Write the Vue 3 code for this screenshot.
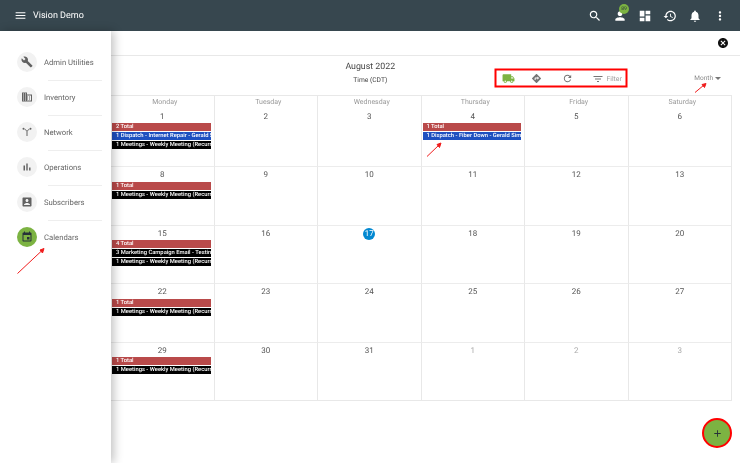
<script setup>
const icons = {
  menu: "M3 18h18v-2H3v2zm0-5h18v-2H3v2zm0-7v2h18V6H3z",
  search: "M15.5 14h-.79l-.28-.27C15.41 12.59 16 11.11 16 9.5 16 5.91 13.09 3 9.5 3S3 5.91 3 9.5 5.91 16 9.5 16c1.61 0 3.09-.59 4.23-1.57l.27.28v.79l5 4.99L20.49 19l-4.99-5zm-6 0C7.01 14 5 11.99 5 9.5S7.01 5 9.5 5 14 7.01 14 9.5 11.99 14 9.5 14z",
  person: "M12 12c2.21 0 4-1.79 4-4s-1.79-4-4-4-4 1.79-4 4 1.79 4 4 4zm0 2c-2.67 0-8 1.34-8 4v2h16v-2c0-2.66-5.33-4-8-4z",
  dashboard: "M3 13h8V3H3v10zm0 8h8v-6H3v6zm10 0h8V11h-8v10zm0-18v6h8V3h-8z",
  history: "M13 3c-4.97 0-9 4.03-9 9H1l3.89 3.89.07.14L9 12H6c0-3.87 3.13-7 7-7s7 3.13 7 7-3.13 7-7 7c-1.93 0-3.68-.79-4.94-2.06l-1.42 1.42C8.27 19.99 10.51 21 13 21c4.97 0 9-4.03 9-9s-4.03-9-9-9zm-1 5v5l4.28 2.54.72-1.21-3.5-2.08V8H12z",
  bell: "M12 22c1.1 0 2-.9 2-2h-4c0 1.1.89 2 2 2zm6-6v-5c0-3.07-1.64-5.64-4.5-6.32V4c0-.83-.67-1.5-1.5-1.5s-1.5.67-1.5 1.5v.68C7.63 5.36 6 7.92 6 11v5l-2 2v1h16v-1l-2-2z",
  more: "M12 8c1.1 0 2-.9 2-2s-.9-2-2-2-2 .9-2 2 .9 2 2 2zm0 2c-1.1 0-2 .9-2 2s.9 2 2 2 2-.9 2-2-.9-2-2-2zm0 6c-1.1 0-2 .9-2 2s.9 2 2 2 2-.9 2-2-.9-2-2-2z",
  build: "M22.7 19l-9.1-9.1c.9-2.3.4-5-1.5-6.9-2-2-5-2.4-7.4-1.3L9 6 6 9 1.6 4.7C.4 7.1.9 10.1 2.9 12.1c1.9 1.9 4.6 2.4 6.9 1.5l9.1 9.1c.4.4 1 .4 1.4 0l2.3-2.3c.5-.4.5-1.1.1-1.4z",
  domain: "M12 7V3H2v18h20V7H12zM6 19H4v-2h2v2zm0-4H4v-2h2v2zm0-4H4V9h2v2zm0-4H4V5h2v2zm4 12H8v-2h2v2zm0-4H8v-2h2v2zm0-4H8V9h2v2zm0-4H8V5h2v2zm10 12h-8v-2h2v-2h-2v-2h2v-2h-2V9h8v10zm-2-8h-2v2h2v-2zm0 4h-2v2h2v-2z",
  network: "M5 3.500a2 2 0 1 1 0 4 2 2 0 0 1 0-4zm14 0a2 2 0 1 1 0 4 2 2 0 0 1 0-4zM7 6.500l4 4.200V20h2v-9.300l4-4.200-.9-1-4.100 4.200-4.100-4.200z",
  chart: "M5 9.2h3V19H5zM10.6 5h2.8v14h-2.8zm5.6 8H19v6h-2.8z",
  account: "M3 5v14c0 1.1.89 2 2 2h14c1.1 0 2-.9 2-2V5c0-1.1-.9-2-2-2H5c-1.11 0-2 .9-2 2zm12 4c0 1.66-1.34 3-3 3s-3-1.34-3-3 1.34-3 3-3 3 1.34 3 3zm-9 8c0-2 4-3.1 6-3.1s6 1.1 6 3.1v1H6v-1z",
  event: "M17 12h-5v5h5v-5zM16 1v2H8V1H6v2H5c-1.11 0-1.99.9-1.99 2L3 19c0 1.1.89 2 2 2h14c1.1 0 2-.9 2-2V5c0-1.1-.9-2-2-2h-1V1h-2zm3 18H5V8h14v11z",
  truck: "M20 8h-3V4H3c-1.1 0-2 .9-2 2v11h2c0 1.66 1.34 3 3 3s3-1.34 3-3h6c0 1.66 1.34 3 3 3s3-1.34 3-3h2v-5l-3-4zM6 18.500c-.83 0-1.500-.67-1.500-1.500s.67-1.500 1.500-1.500 1.500.67 1.500 1.500-.67 1.500-1.500 1.500zm13.500-9l1.960 2.500H17V9.500h2.500zm-1.500 9c-.83 0-1.500-.67-1.500-1.500s.67-1.500 1.500-1.500 1.500.67 1.500 1.500-.67 1.500-1.500 1.500z",
  directions: "M21.71 11.29l-9-9c-.39-.39-1.02-.39-1.41 0l-9 9c-.39.39-.39 1.02 0 1.41l9 9c.39.39 1.02.39 1.41 0l9-9c.39-.38.39-1.01 0-1.41zM14 14.500V12h-4v3H8v-4c0-.55.45-1 1-1h5V7.500l3.500 3.500-3.500 3.500z",
  refresh: "M17.65 6.35C16.2 4.9 14.21 4 12 4c-4.42 0-7.99 3.58-7.99 8s3.57 8 7.99 8c3.73 0 6.84-2.55 7.73-6h-2.08c-.82 2.33-3.04 4-5.65 4-3.31 0-6-2.69-6-6s2.69-6 6-6c1.66 0 3.14.69 4.22 1.78L13 11h7V4l-2.35 2.35z",
  filter: "M10 18h4v-2h-4v2zM3 6v2h18V6H3zm3 7h12v-2H6v2z",
  cancel: "M12 2C6.47 2 2 6.47 2 12s4.470 10 10 10 10-4.470 10-10S17.530 2 12 2zm5 13.590L15.590 17 12 13.410 8.410 17 7 15.590 10.590 12 7 8.410 8.410 7 12 10.590 15.590 7 17 8.410 13.410 12 17 15.590z",
  plus: "M19 13h-6v6h-2v-6H5v-2h6V5h2v6h6v2z"
}

const topIcons = ["search", "person", "dashboard", "history", "bell", "more"]

const navItems = [
  { label: "Admin Utilities", icon: "build" },
  { label: "Inventory", icon: "domain" },
  { label: "Network", icon: "network" },
  { label: "Operations", icon: "chart" },
  { label: "Subscribers", icon: "account" },
  { label: "Calendars", icon: "event", active: true }
]

// sunday sits behind the drawer, so only monday to saturday are drawn
const weekdays = ["Monday", "Tuesday", "Wednesday", "Thursday", "Friday", "Saturday"]

const meeting = { text: "1 Meetings - Weekly Meeting (Recurring)", kind: "black" }
const events = {
  1: [
    { text: "2 Total", kind: "red" },
    { text: "1 Dispatch - Internet Repair - Gerald Simmons", kind: "blue" },
    meeting
  ],
  4: [
    { text: "1 Total", kind: "red" },
    { text: "1 Dispatch - Fiber Down - Gerald Simmons", kind: "blue" }
  ],
  8: [{ text: "1 Total", kind: "red" }, meeting],
  15: [
    { text: "4 Total", kind: "red" },
    { text: "3 Marketing Campaign Email - Testing", kind: "black" },
    meeting
  ],
  22: [{ text: "1 Total", kind: "red" }, meeting],
  29: [{ text: "1 Total", kind: "red" }, meeting]
}

const days = []
for (let n = 1; n < 35; n++) {
  if (n % 7 === 0) continue
  if (n <= 31) days.push({ key: "a" + n, label: n, events: events[n] || [], today: n === 17 })
  else days.push({ key: "s" + (n - 31), label: n - 31, muted: true })
}
</script>

<template>
  <div class="page">
    <header class="topbar">
      <svg class="ico menu-ico" viewBox="0 0 24 24"><path :d="icons.menu" /></svg>
      <span class="brand">Vision Demo</span>
      <div class="top-actions">
        <span v-for="name in topIcons" :key="name" class="top-btn">
          <svg class="ico" viewBox="0 0 24 24"><path :d="icons[name]" /></svg>
          <span v-if="name === 'person'" class="count">89</span>
        </span>
      </div>
    </header>

    <div class="closebar">
      <svg class="close-ico" viewBox="0 0 24 24"><path :d="icons.cancel" /></svg>
    </div>

    <section class="calendar">
      <div class="toolbar">
        <div class="title">
          <div class="month">August 2022</div>
          <div class="zone">Time (CDT)</div>
        </div>
        <div class="tools">
          <svg class="tool truck" viewBox="0 0 24 24"><path :d="icons.truck" /></svg>
          <svg class="tool" viewBox="0 0 24 24"><path :d="icons.directions" /></svg>
          <svg class="tool" viewBox="0 0 24 24"><path :d="icons.refresh" /></svg>
          <span class="filter">
            <svg class="tool" viewBox="0 0 24 24"><path :d="icons.filter" /></svg>
            Filter
          </span>
        </div>
        <div class="view-select">Month<span class="caret"></span></div>
      </div>

      <div class="grid">
        <div v-for="day in weekdays" :key="day" class="weekday">{{ day }}</div>
        <div v-for="d in days" :key="d.key" class="cell">
          <div class="num" :class="{ muted: d.muted, today: d.today }">{{ d.label }}</div>
          <div
            v-for="e in d.events"
            :key="e.text"
            class="event"
            :class="e.kind"
          >{{ e.text }}</div>
        </div>
      </div>
    </section>

    <aside class="drawer">
      <div class="nav-list">
        <div v-for="item in navItems" :key="item.label" class="nav-item">
          <span class="nav-ico" :class="{ active: item.active }">
            <svg viewBox="0 0 24 24"><path :d="icons[item.icon]" /></svg>
          </span>
          <span class="nav-label">{{ item.label }}</span>
        </div>
      </div>
    </aside>

    <button class="fab">
      <svg viewBox="0 0 24 24"><path :d="icons.plus" /></svg>
    </button>

    <!-- screenshot annotations -->
    <svg class="marks" viewBox="0 0 740 463">
      <g stroke="#f01c1c" fill="#f01c1c" stroke-width="1">
        <line x1="17.500" y1="273.500" x2="42" y2="250.500" />
        <polygon points="44,248.500 40,250 42.500,253" />
        <line x1="427" y1="156.500" x2="439" y2="145" />
        <polygon points="441,143 437,144.500 439.500,147.500" />
        <line x1="695" y1="92.500" x2="704" y2="85" />
        <polygon points="706,83.500 702,84.500 704.500,87.500" />
      </g>
      <rect x="495.500" y="69.500" width="131" height="17" fill="none" stroke="#f00" stroke-width="2" />
    </svg>
  </div>
</template>

<style scoped>
.page {
  position: relative;
  width: 740px;
  height: 463px;
  overflow: hidden;
  background: #fff;
  font-family: Roboto, "Liberation Sans", sans-serif;
  color: #555;
  text-rendering: geometricPrecision;
  filter: blur(0.3px);
}

.ico {
  width: 14px;
  height: 14px;
  fill: #fff;
  display: block;
}

.topbar {
  height: 31px;
  background: #37474f;
  display: flex;
  align-items: center;
  padding-left: 14px;
  color: #fff;
}

.menu-ico {
  width: 13px;
  height: 13px;
}

.brand {
  margin-left: 6px;
  font-size: 9px;
}

.top-actions {
  margin-left: auto;
  margin-right: 13px;
  display: flex;
  gap: 11px;
}

.top-btn {
  position: relative;
  width: 14px;
  height: 14px;
}

.count {
  position: absolute;
  top: -5px;
  left: 6px;
  width: 10px;
  height: 10px;
  border-radius: 50%;
  background: #7cb342;
  color: #263238;
  font-size: 5px;
  line-height: 10px;
  text-align: center;
}

.closebar {
  height: 24px;
  border-bottom: 1px solid #e8e8e8;
  display: flex;
  align-items: center;
  justify-content: flex-end;
  padding-right: 11px;
}

.close-ico {
  width: 12px;
  height: 12px;
  fill: #111;
}

.calendar {
  padding: 0 8px 0 6.5px;
}

.toolbar {
  height: 39px;
  position: relative;
  display: flex;
  align-items: center;
}

.title {
  position: absolute;
  left: 0;
  right: 0;
  top: 4.5px;
  text-align: center;
}

.month {
  font-size: 8.8px;
  line-height: 13px;
  color: #444;
  margin-left: 2px;
}

.zone {
  font-size: 6.7px;
  line-height: 13px;
  margin-top: 0.5px;
  color: #444;
  margin-left: 2px;
}

.tools {
  position: absolute;
  left: 489px;
  top: 14px;
  width: 131px;
  height: 17px;
  display: flex;
  align-items: center;
  padding-left: 6px;
  box-sizing: border-box;
}

.tool {
  width: 11px;
  height: 11px;
  fill: #757575;
  flex: none;
}

.tools .truck {
  fill: #7cb342;
  width: 13px;
  height: 13px;
  margin-right: 16px;
}

.tools > .tool:nth-child(2) {
  margin-right: 20px;
}

.filter {
  display: flex;
  align-items: center;
  gap: 3px;
  font-size: 6.8px;
  color: #9e9e9e;
  margin-left: 19px;
}

.filter .tool {
  width: 12px;
  height: 12px;
}

.view-select {
  position: absolute;
  right: 11px;
  top: 17px;
  font-size: 6.5px;
  line-height: 11px;
  color: #888;
  display: flex;
  align-items: center;
}

.caret {
  margin-left: 2px;
  border-left: 3px solid transparent;
  border-right: 3px solid transparent;
  border-top: 3px solid #777;
}

.grid {
  display: grid;
  margin-left: 103.5px;
  grid-template-columns: repeat(6, 103.5px);
  grid-template-rows: 11.5px repeat(5, 58.5px);
  border-top: 1px solid #e8e8e8;
  border-bottom: 1px solid #e8e8e8;
  border-right: 1px solid #e8e8e8;
}

.weekday {
  font-size: 7px;
  line-height: 12px;
  height: 11.5px;
  padding-left: 5px;
  text-align: center;
  color: #999;
  border-left: 1px solid #e8e8e8;
}

.cell {
  min-width: 0;
  overflow: hidden;
  border-left: 1px solid #e8e8e8;
  border-top: 1px solid #ececec;
}

.cell:nth-child(n + 7):nth-child(-n + 12) {
  border-top: none;
  padding-top: 1px;
}

.num {
  width: 12px;
  height: 12px;
  margin: 2px auto 0.5px;
  font-size: 8px;
  line-height: 12px;
  text-align: center;
  color: #555;
  border-radius: 50%;
  white-space: nowrap;
  display: flex;
  justify-content: center;
}

.num.muted {
  color: #aaa;
}

.num.today {
  background: #0288d1;
  color: #fff;
}

.event {
  height: 8px;
  margin: 0 3px 1px 1px;
  padding-left: 4px;
  font-size: 5.8px;
  font-weight: 500;
  line-height: 8px;
  color: #fff;
  white-space: nowrap;
  overflow: hidden;
}

.red {
  background: #b94a4a;
}

.blue {
  background: #1e50c0;
}

.black {
  background: #000;
}

.drawer {
  position: absolute;
  left: 0;
  top: 31px;
  bottom: 0;
  width: 111px;
  background: #fff;
  box-shadow: 3px 0 9px rgba(0, 0, 0, 0.24);
}

.nav-list {
  padding: 13.5px 0 0 17px;
  display: flex;
  flex-direction: column;
}

.nav-item {
  height: 35px;
  display: flex;
  align-items: center;
  position: relative;
}

.nav-item + .nav-item::before {
  content: "";
  position: absolute;
  left: 31px;
  right: 9px;
  top: 0;
  border-top: 1px solid #eee;
}

.nav-ico {
  width: 20px;
  height: 20px;
  border-radius: 50%;
  background: #f2f2f2;
  display: flex;
  align-items: center;
  justify-content: center;
  flex: none;
}

.nav-ico svg {
  width: 12px;
  height: 12px;
  fill: #616161;
}

.nav-ico.active {
  background: #7cb342;
}

.nav-ico.active svg {
  fill: #263238;
}

.nav-label {
  margin-left: 7px;
  font-size: 7.7px;
  color: #666;
  white-space: nowrap;
}

.fab {
  position: absolute;
  left: 702px;
  top: 418px;
  width: 30px;
  height: 30px;
  padding: 0;
  border: 2px solid #f00;
  border-radius: 50%;
  background: #7cb342;
  display: flex;
  align-items: center;
  justify-content: center;
}

.fab svg {
  width: 11px;
  height: 11px;
  fill: #263238;
}

.marks {
  position: absolute;
  left: 0;
  top: 0;
  width: 740px;
  height: 463px;
  pointer-events: none;
}
</style>
